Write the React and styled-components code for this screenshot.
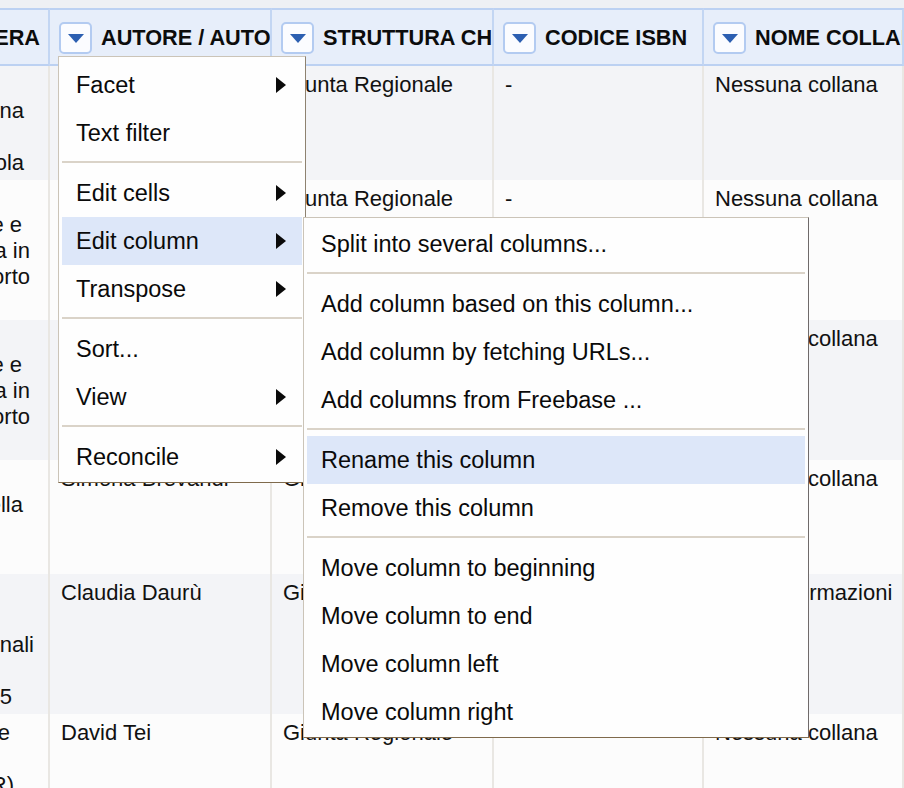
import React from 'react'
import styled, { createGlobalStyle } from 'styled-components'

const Global = createGlobalStyle`
  html, body {
    margin: 0;
    padding: 0;
    background: #fbfbfc;
    overflow: hidden;
  }
  * { box-sizing: border-box; }
`

const columns = [
  { title: 'TITOLO OPERA', tail: true },
  { title: 'AUTORE / AUTORI' },
  { title: 'STRUTTURA CHE HA PRODOTTO' },
  { title: 'CODICE ISBN' },
  { title: 'NOME COLLANA' },
]

// first column is scrolled off to the left: [text, right edge in px]
const rows = [
  {
    first: [['', 0], ['Toscana', 24], ['', 0], ['scuola', 24]],
    author: 'Mario Rossi',
    org: 'Giunta Regionale',
    isbn: '-',
    series: 'Nessuna collana',
  },
  {
    first: [['', 0], ['Salute e', 22], ['Toscana in', 30], ['supporto', 30], ['', 0]],
    author: 'Laura Bianchi',
    org: 'Giunta Regionale',
    isbn: '-',
    series: 'Nessuna collana',
  },
  {
    first: [['', 0], ['Salute e', 22], ['Toscana in', 30], ['supporto', 30], ['', 0]],
    author: 'Laura Bianchi',
    org: 'Giunta Regionale',
    isbn: '-',
    series: 'Nessuna collana',
  },
  {
    first: [['', 0], ['della', 23], ['', 0], ['', 0]],
    author: 'Simona Brevandi',
    org: 'Giunta Regionale',
    isbn: '-',
    series: 'Nessuna collana',
  },
  {
    first: [['', 0], ['', 0], ['regionali', 34], ['', 0], ['2015', 12]],
    author: 'Claudia Daurù',
    org: 'Giunta Regionale',
    isbn: '-',
    series: 'Serie Informazioni e Studi',
  },
  {
    first: [['Toscane', 10], ['', 0], ['(GR)', 14], ['', 0]],
    author: 'David Tei',
    org: 'Giunta Regionale',
    isbn: '-',
    series: 'Nessuna collana',
  },
]

const mainMenu = [
  { label: 'Facet', sub: true },
  { label: 'Text filter' },
  'sep',
  { label: 'Edit cells', sub: true },
  { label: 'Edit column', sub: true, active: true },
  { label: 'Transpose', sub: true },
  'sep',
  { label: 'Sort...' },
  { label: 'View', sub: true },
  'sep',
  { label: 'Reconcile', sub: true },
]

const columnMenu = [
  { label: 'Split into several columns...' },
  'sep',
  { label: 'Add column based on this column...' },
  { label: 'Add column by fetching URLs...' },
  { label: 'Add columns from Freebase ...' },
  'sep',
  { label: 'Rename this column', active: true },
  { label: 'Remove this column' },
  'sep',
  { label: 'Move column to beginning' },
  { label: 'Move column to end' },
  { label: 'Move column left' },
  { label: 'Move column right' },
]

function Page() {
  return (
    <Screen>
      <TopStrip />
      <Table>
        {columns.map((c, i) => (
          <HeadCell key={c.title} $tail={c.tail}>
            {!c.tail && (
              <DropButton>
                <svg width="16" height="9" viewBox="0 0 16 9">
                  <path d="M0 0 H16 L8 9 Z" fill="#2c5fb1" />
                </svg>
              </DropButton>
            )}
            <HeadLabel>{c.title}</HeadLabel>
          </HeadCell>
        ))}

        {rows.map((r, i) => (
          <React.Fragment key={i}>
            <Cell $odd={i % 2 === 0} $tail>
              {r.first.map(([t, end], j) => (
                <TailLine key={j} $end={end}>{t}</TailLine>
              ))}
            </Cell>
            <Cell $odd={i % 2 === 0}>{r.author}</Cell>
            <Cell $odd={i % 2 === 0}>{r.org}</Cell>
            <Cell $odd={i % 2 === 0}>{r.isbn}</Cell>
            <Cell $odd={i % 2 === 0} $last>{r.series}</Cell>
          </React.Fragment>
        ))}
      </Table>

      <Menu $left={58} $top={56} $width={248} $pad="4px 0 1px">
        {mainMenu.map((m, i) =>
          m === 'sep' ? (
            <Separator key={i} />
          ) : (
            <Item key={i} $active={m.active}>
              <span>{m.label}</span>
              {m.sub && <Arrow />}
            </Item>
          )
        )}
      </Menu>

      <Menu $left={303} $top={217} $width={506} $pad="2px 0 1px" $dark>
        {columnMenu.map((m, i) =>
          m === 'sep' ? (
            <Separator key={i} />
          ) : (
            <Item key={i} $active={m.active}>
              <span>{m.label}</span>
            </Item>
          )
        )}
      </Menu>
    </Screen>
  )
}

const Screen = styled.div`
  position: relative;
  width: 904px;
  height: 788px;
  overflow: hidden;
  font-family: "Liberation Sans", Arial, Helvetica, sans-serif;
  color: #111;
  background: #fbfbfc;
`

const TopStrip = styled.div`
  height: 8px;
  background: #eef0f4;
`

const Table = styled.div`
  display: grid;
  grid-template-columns: 50px 222px 222px 210px 1fr;
  grid-template-rows: 58px;
  grid-auto-rows: auto;
`

const HeadCell = styled.div`
  display: flex;
  align-items: center;
  justify-content: ${p => (p.$tail ? 'flex-end' : 'flex-start')};
  gap: 9px;
  padding: 2px ${p => (p.$tail ? '8px' : '0')} 0 ${p => (p.$tail ? '0' : '9px')};
  background: #e7eefa;
  border-top: 2px solid #bcd1f2;
  border-bottom: 2px solid #bcd1f2;
  border-right: 2px solid #c3d6f3;
  overflow: hidden;
  white-space: nowrap;
`

const DropButton = styled.div`
  flex: none;
  width: 33px;
  height: 32px;
  display: flex;
  align-items: center;
  justify-content: center;
  background: #fbfcff;
  border: 2px solid #b3cbf1;
  border-radius: 5px;
`

const HeadLabel = styled.span`
  flex: none;
  font-size: 21.7px;
  font-weight: bold;
  color: #0c0c0c;
`

const Cell = styled.div`
  padding: 6px ${p => (p.$last ? '4px' : '10px')} 4px 11px;
  font-size: 22px;
  line-height: 26px;
  background: ${p => (p.$odd ? '#f3f4f7' : '#fcfcfc')};
  border-right: 2px solid #e9e7e3;
  overflow: hidden;
  ${p => p.$tail && 'padding-left: 0; padding-right: 0;'}
`

const TailLine = styled.div`
  display: flex;
  justify-content: flex-end;
  width: ${p => p.$end}px;
  height: 26px;
  white-space: nowrap;
  overflow: visible;
`

const Menu = styled.div`
  position: absolute;
  left: ${p => p.$left}px;
  top: ${p => p.$top}px;
  width: ${p => p.$width}px;
  padding: ${p => p.$pad};
  background: #fefefe;
  border: 1px solid;
  border-color: #cbc4b8 ${p => (p.$dark ? '#6f6a6a' : '#8e8270')} #7f6a4c #cbc4b8;
  font-size: 23.5px;
  color: #0a0a0a;
`

const Item = styled.div`
  display: flex;
  align-items: center;
  justify-content: space-between;
  height: 48px;
  margin: 0 3px;
  padding: 0 16px 0 14px;
  white-space: nowrap;
  background: ${p => (p.$active ? '#dde7f9' : 'transparent')};
`

const Arrow = styled.span`
  width: 0;
  height: 0;
  border-top: 8px solid transparent;
  border-bottom: 8px solid transparent;
  border-left: 10px solid #0a0a0a;
`

const Separator = styled.div`
  height: 2px;
  margin: 4px 3px 6px;
  background: #dad3c8;
`

export default function App() {
  return (
    <>
      <Global />
      <Page />
    </>
  )
}
